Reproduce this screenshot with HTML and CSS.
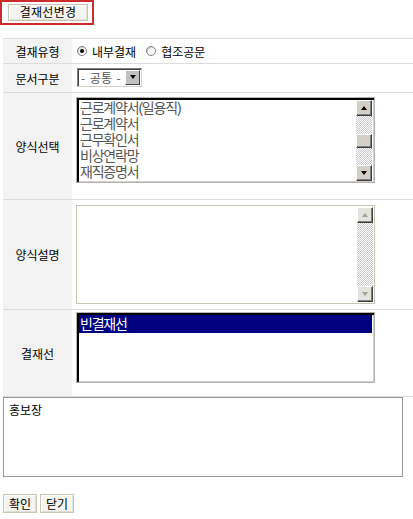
FILE: index.html
```html
<!DOCTYPE html>
<html>
<head>
  <title>결재선변경</title>
  <link rel="stylesheet" href="styles.css">
</head>
<body>
<div class="top">
  <div class="change-box">
    <span class="btn btn-change">결재선변경</span>
  </div>
</div>

<div class="form-table">
  <div class="label">결재유형</div>
  <div class="cell cell-radio">
    <span class="radio checked"></span><span class="radio-text">내부결재</span>
    <span class="radio"></span><span class="radio-text">협조공문</span>
  </div>

  <div class="label">문서구분</div>
  <div class="cell cell-select">
    <div class="select">
      <span class="select-text">- 공통 -</span>
      <span class="select-arrow"><span class="tri-down"></span></span>
    </div>
  </div>

  <div class="label">양식선택</div>
  <div class="cell cell-list">
    <div class="listbox list-forms">
      <div class="list-items">
        <div class="item">근로계약서(일용직)</div>
        <div class="item">근로계약서</div>
        <div class="item">근무확인서</div>
        <div class="item">비상연락망</div>
        <div class="item">재직증명서</div>
      </div>
      <div class="scrollbar">
        <span class="sb-btn"><span class="tri-up"></span></span>
        <span class="sb-track"></span>
        <span class="sb-thumb"></span>
        <span class="sb-track short"></span>
        <span class="sb-btn"><span class="tri-down"></span></span>
      </div>
    </div>
  </div>

  <div class="label">양식설명</div>
  <div class="cell cell-desc">
    <div class="textarea-box">
      <div class="textarea-body"></div>
      <div class="scrollbar disabled">
        <span class="sb-btn"><span class="tri-up"></span></span>
        <span class="sb-track"></span>
        <span class="sb-btn"><span class="tri-down"></span></span>
      </div>
    </div>
  </div>

  <div class="label">결재선</div>
  <div class="cell cell-line">
    <div class="listbox list-line">
      <div class="item selected">빈결재선</div>
    </div>
  </div>
</div>

<div class="memo">홍보장</div>

<div class="actions">
  <span class="btn btn-small">확인</span>
  <span class="btn btn-small">닫기</span>
</div>
</body>
</html>
```

FILE: styles.css
```css
/* page base */
body {
  margin: 0;
  padding: 0;
  background-color: #fff;
  color: #000;
  font-family: "Noto Sans CJK KR", "Noto Sans", sans-serif;
  font-size: 12px;
}

/* top button inside the red frame */
.top {
  height: 25px;
  margin-bottom: 13px;
}

.change-box {
  display: inline-block;
  box-sizing: border-box;
  width: 94px;
  height: 25px;
  border: 2px solid #cc2b2b;
  padding: 1px 4px 3px 6px;
}

.btn {
  display: inline-flex;
  align-items: center;
  justify-content: center;
  box-sizing: border-box;
  background-color: #f4f4f0;
  border: 1px solid #c9c5b3;
  box-shadow: inset 1px 1px 0 #fff, inset -1px -1px 0 #e2dfd4;
  font-size: 12px;
  line-height: 1;
}

.btn-change {
  width: 80px;
  height: 17px;
  letter-spacing: 0.3px;
}

/* form rows */
.form-table {
  display: grid;
  grid-template-columns: 69px 1fr;
  grid-template-rows: 25px 29px 107px 110px 87px;
  margin-left: 3px;
  border-bottom: 1px solid #dcdcdc;
}

.label,
.cell {
  border-top: 1px solid #dcdcdc;
  box-sizing: border-box;
}

.label {
  background-color: #f3f3f3;
  display: flex;
  align-items: center;
  justify-content: center;
}

.cell {
  padding-left: 4px;
  display: flex;
}

.cell-radio {
  align-items: center;
  padding-left: 5px;
}

.cell-select {
  align-items: center;
  padding-left: 5px;
  padding-bottom: 2px;
}

.cell-list {
  padding-top: 4px;
}

.cell-desc {
  padding-top: 5px;
}

.cell-line {
  padding-top: 2px;
}

/* radio buttons */
.radio {
  display: inline-block;
  position: relative;
  width: 8px;
  height: 8px;
  border: 1px solid #808080;
  border-radius: 50%;
  background-color: #fff;
  box-shadow: inset 1px 1px 0 #d4d0c8;
}

.radio.checked::after {
  content: "";
  position: absolute;
  left: 2px;
  top: 2px;
  width: 4px;
  height: 4px;
  border-radius: 50%;
  background-color: #000;
}

.radio-text {
  margin-left: 5px;
  margin-right: 10px;
}

/* dropdown */
.select {
  display: flex;
  box-sizing: border-box;
  width: 65px;
  height: 19px;
  border: 1px solid #808080;
  border-right-color: #d4d0c8;
  border-bottom-color: #d4d0c8;
  box-shadow: inset 1px 1px 0 #404040;
  background-color: #fff;
}

.select-text {
  flex: 1;
  padding-left: 3px;
  padding-top: 1px;
  color: #555;
  font-size: 12px;
  line-height: 15px;
  white-space: nowrap;
  word-spacing: 2px;
}

.select-arrow {
  width: 15px;
  margin: 1px 1px 1px 0;
  background-color: #c0c0c0;
  border: 1px solid;
  border-color: #fff #404040 #404040 #fff;
  box-sizing: border-box;
  display: flex;
  align-items: center;
  justify-content: center;
}

.tri-down,
.tri-up {
  width: 0;
  height: 0;
  border-left: 3px solid transparent;
  border-right: 3px solid transparent;
}

.tri-down {
  border-top: 4px solid #000;
}

.tri-up {
  border-bottom: 4px solid #000;
}

/* list boxes */
.listbox {
  box-sizing: border-box;
  width: 299px;
  background-color: #fff;
  border: 1px solid #b4b4b4;
  box-shadow: inset 2px 2px 0 #000, inset -1px -1px 0 #d4d0c8;
  padding: 2px 2px 1px 2px;
  display: flex;
}

.list-forms {
  height: 86px;
}

.list-line {
  height: 71px;
  flex-direction: column;
}

.list-items {
  flex: 1;
  overflow: hidden;
}

.item {
  font-family: "Liberation Sans", "Noto Sans CJK KR", sans-serif;
  font-size: 14px;
  letter-spacing: -1.2px;
  line-height: 16px;
  height: 16px;
  color: #555;
  padding-left: 1px;
  white-space: nowrap;
}

.item.selected {
  background-color: #000080;
  color: #fff;
  line-height: 18px;
  height: 18px;
}

/* classic scrollbar */
.scrollbar {
  width: 16px;
  display: flex;
  flex-direction: column;
}

.sb-btn {
  box-sizing: border-box;
  height: 16px;
  background-color: #d4d0c8;
  border: 1px solid;
  border-color: #fff #404040 #404040 #fff;
  box-shadow: inset -1px -1px 0 #808080;
  display: flex;
  align-items: center;
  justify-content: center;
}

.sb-track {
  flex: 1;
  background-color: #fff;
  background-image: repeating-conic-gradient(#c8c8c8 0 25%, #fff 0 50%);
  background-size: 2px 2px;
}

.sb-track.short {
  flex: 0 0 17px;
}

.sb-thumb {
  box-sizing: border-box;
  height: 14px;
  background-color: #d4d0c8;
  border: 1px solid;
  border-color: #fff #404040 #404040 #fff;
  box-shadow: inset -1px -1px 0 #808080;
}

.list-forms .sb-track:first-of-type {
  flex: 0 0 23px;
}

.scrollbar.disabled .tri-up {
  border-bottom-color: #a0a0a0;
}

.scrollbar.disabled .tri-down {
  border-top-color: #a0a0a0;
}

.scrollbar.disabled .sb-btn {
  background-color: #e4e2dc;
}

/* description textarea */
.textarea-box {
  box-sizing: border-box;
  width: 299px;
  height: 99px;
  border: 1px solid #c9c5b3;
  background-color: #fff;
  display: flex;
  padding: 1px;
}

.textarea-body {
  flex: 1;
}

/* memo area */
.memo {
  box-sizing: border-box;
  width: 400px;
  height: 80px;
  margin-left: 3px;
  border: 1px solid #999;
  padding: 5px 5px;
  font-size: 12px;
  line-height: 14px;
}

/* bottom buttons */
.actions {
  display: flex;
  gap: 3px;
  margin: 17px 0 0 3px;
}

.btn-small {
  width: 34px;
  height: 19px;
}
```
